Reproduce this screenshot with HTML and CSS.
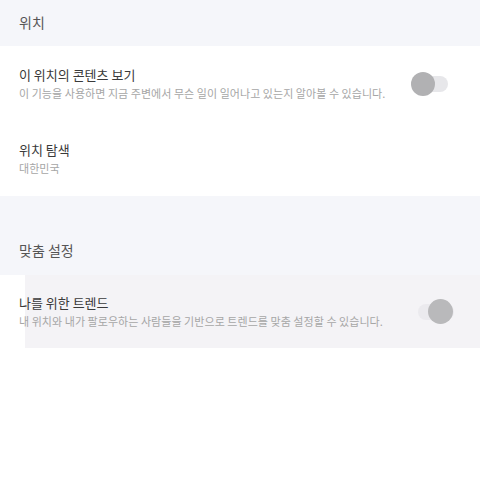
FILE: index.html
```html
<html>
    <head>
        <meta charset="UTF-8" name="viewport" content="width=device-width, initial-scale=1.0">
        <link rel="stylesheet" href="styles.css">
    </head>
    <body>
        <div class="overskrift">위치</div>

        <div class="gruppe">
            <div class="rad">
                <div class="tekst">
                    <p class="tittel">이 위치의 콘텐츠 보기</p>
                    <p class="under">이 기능을 사용하면 지금 주변에서 무슨 일이 일어나고 있는지 알아볼 수 있습니다.</p>
                </div>
                <div class="bryter av"><span class="knott"></span></div>
            </div>
            <div class="rad">
                <div class="tekst">
                    <p class="tittel">위치 탐색</p>
                    <p class="under">대한민국</p>
                </div>
            </div>
        </div>

        <div class="overskrift stor">맞춤 설정</div>

        <div class="gruppe">
            <div class="rad trykket">
                <div class="tekst">
                    <p class="tittel">나를 위한 트렌드</p>
                    <p class="under">내 위치와 내가 팔로우하는 사람들을 기반으로 트렌드를 맞춤 설정할 수 있습니다.</p>
                </div>
                <div class="bryter paa"><span class="knott"></span></div>
            </div>
        </div>
    </body>
</html>
```

FILE: styles.css
```css
html, body {
    margin: 0;
    padding: 0;
    background: white;
    font-family: "Noto Sans CJK KR", "Noto Sans", sans-serif;
}

p {
    margin: 0;
}

.overskrift {
    height: 46px;
    line-height: 44px;
    padding-left: 19px;
    background: #f5f6fa;
    color: #555;
    font-size: 14px;
}

.overskrift.stor {
    height: 79px;
    line-height: 0;
    display: flex;
    align-items: flex-end;
    padding-bottom: 25px;
    box-sizing: border-box;
}

.rad {
    height: 75px;
    display: flex;
    align-items: center;
    padding: 0 32px 0 19px;
    box-sizing: border-box;
}

/* row that is being pressed */
.rad.trykket {
    height: 73px;
    padding-top: 1px;
    background: linear-gradient(to right, white 25px, #f4f3f6 25px);
}

.tekst {
    flex: 1;
}

.tittel {
    font-size: 13px;
    color: #3a3a3a;
    line-height: 18px;
}

.under {
    font-size: 11px;
    color: #a6a6a6;
    line-height: 18px;
    letter-spacing: 0.05px;
}

.bryter {
    position: relative;
    width: 36px;
    height: 16px;
    border-radius: 8px;
    background: #e7e7ea;
}

.knott {
    position: absolute;
    top: -4px;
    width: 24px;
    height: 24px;
    border-radius: 50%;
    background: #b1b1b3;
}

.bryter.av .knott {
    left: -1px;
}

.bryter.paa {
    margin-right: -6px;
    background: #ebeaee;
}

.bryter.paa .knott {
    left: 10px;
    width: 25px;
    height: 25px;
    top: -5px;
    background: #b9b9bb;
}
```
